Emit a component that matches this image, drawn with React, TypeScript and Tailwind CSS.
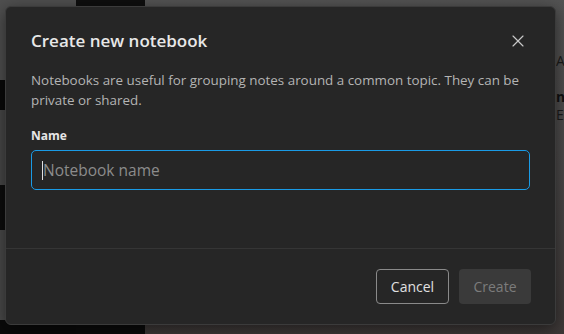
import { X } from 'lucide-react'

const FONT = { fontFamily: '"Open Sans", "Noto Sans", sans-serif' }

function Backdrop() {
  return (
    <div className="flex h-full w-full">
      <div className="flex w-[76px] flex-col">
        <div className="h-[80px] bg-[#4f4f4f]" />
        <div className="h-[30px] bg-[#0a0a0a]" />
        <div className="h-[75px] bg-[#474747]" />
        <div className="h-[45px] bg-[#0c0c0c]" />
        <div className="h-[90px] bg-[#4a4a4a]" />
        <div className="flex-1 bg-[#0a0a0a]" />
      </div>
      <div className="flex w-[69px] flex-col bg-[#0b0b0b]">
        <div className="h-[6px] bg-[#0e0e0e]" />
      </div>
      <div className="flex flex-1 flex-col items-end bg-gradient-to-b from-[#535353] via-[#4a4848] to-[#3d3837] pt-[52px] pr-[0px] text-[14px] leading-[18px] text-[#1a1a1a]">
        <p className="w-[8px] overflow-hidden">A</p>
        <p className="mt-[18px] w-[8px] overflow-hidden font-bold text-[#111]">n</p>
        <p className="w-[8px] overflow-hidden">ER</p>
      </div>
    </div>
  )
}

export default function App() {
  return (
    <div className="relative h-[334px] w-[564px] overflow-hidden bg-[#0b0b0b]" style={FONT}>
      <Backdrop />

      <div className="absolute left-[5px] top-[6px] flex h-[319px] w-[551px] flex-col rounded-[6px] border border-[#3b3b3b] bg-[#262626] shadow-[0_4px_16px_rgba(0,0,0,0.5)]">
        <div className="flex-1 px-[25px] pt-[22px]">
          <div className="flex items-center justify-between">
            <h2 className="text-[17px] font-semibold leading-[24px] text-[#e8e8e8]">
              Create new notebook
            </h2>
            <button type="button" className="mr-[2px] text-[#c8c8c8]">
              <X size={20} strokeWidth={1.4} />
            </button>
          </div>

          <p className="mt-[17px] text-[13.4px] leading-[20px] text-[#b4b4b4]">
            Notebooks are useful for grouping notes around a common topic. They can be
            private or shared.
          </p>

          <p className="mt-[18px] text-[12px] font-bold leading-[16px] text-[#e6e6e6]">Name</p>

          <div className="mt-[6px] flex h-[40px] items-center rounded-[5px] border border-[#1a9be6] px-[10px]">
            <span className="h-[19px] w-px bg-[#e0e0e0]" />
            <span className="pt-[2px] text-[15.5px] text-[#8c8c8c]">Notebook name</span>
          </div>
        </div>

        <div className="flex justify-end gap-[10px] border-t border-[#353535] px-[24px] pb-[20px] pt-[20px]">
          <button
            type="button"
            className="h-[35px] w-[73px] rounded-[4px] border border-[#8a8a8a] text-[14px] text-[#e0e0e0]"
          >
            Cancel
          </button>
          <button
            type="button"
            className="h-[35px] w-[72px] rounded-[4px] bg-[#3a3a3a] text-[14px] text-[#7c7c7c]"
          >
            Create
          </button>
        </div>
      </div>
    </div>
  )
}
